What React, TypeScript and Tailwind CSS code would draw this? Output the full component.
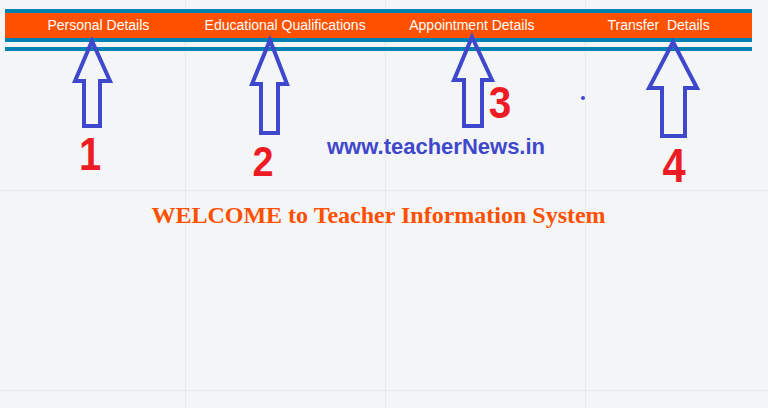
import React from "react";

const navItems = ["Personal Details", "Educational Qualifications", "Appointment Details", "Transfer\u00a0 Details"];

const arrows: number[][] = [
  // tipX, tipY, headL, headR, headY, shaftL, shaftR, bottom
  [92, 41, 75, 110, 81, 84, 100, 126],
  [270, 40, 252, 287, 84, 261, 278, 133],
  [472, 37, 454, 492, 80, 464, 482, 126],
  [673, 42, 649, 697, 88, 662, 685, 136],
];

export default function App() {
  return (
    <div
      className="relative w-full min-h-[408px] overflow-hidden bg-[#f3f5f7] bg-[linear-gradient(to_right,#e5eaef_1px,transparent_1px),linear-gradient(to_bottom,#e5eaef_1px,transparent_1px)] bg-[size:200px_200px] bg-[position:185px_190px]"
      style={{ fontFamily: '"Liberation Sans", Arial, sans-serif' }}
    >
      {/* Navigation bar */}
      <div className="pt-[9px] pl-[5px]">
        <div className="w-[747px]">
          <div className="border-t-4 border-b-4 border-[#0282b3] bg-[#ff5100]">
            <div className="grid grid-cols-4 h-[25px] items-center text-[14px] leading-[25px] text-white">
              {navItems.map((t) => (
                <div key={t} className="text-center whitespace-pre">{t}</div>
              ))}
            </div>
          </div>
          <div className="mt-[5px] h-[4px] bg-[#0282b3]" />
        </div>
      </div>

      {/* Site watermark */}
      <div className="mt-[85px] pl-[327px] text-[22px] leading-[22px] font-bold text-[#3f48cc]">
        www.teacherNews.in
      </div>

      {/* Welcome heading */}
      <div className="pl-[5px]">
        <h1
          className="w-[747px] mt-[45px] text-center text-[24px] leading-[24px] font-bold text-[#ff5000]"
          style={{ fontFamily: '"Liberation Serif", "Times New Roman", serif' }}
        >
          WELCOME to Teacher Information System
        </h1>
      </div>

      {/* Annotation arrows */}
      <svg className="pointer-events-none absolute left-0 top-0" width="768" height="408" viewBox="0 0 768 408">
        {arrows.map(([tx, ty, hl, hr, hy, sl, sr, b], i) => (
          <polygon
            key={i}
            points={`${tx},${ty} ${hr},${hy} ${sr},${hy} ${sr},${b} ${sl},${b} ${sl},${hy} ${hl},${hy}`}
            fill="none"
            stroke="#3f48cc"
            strokeWidth="4"
            strokeLinejoin="miter"
          />
        ))}
        <circle cx="583" cy="98" r="2" fill="#3f48cc" />
      </svg>

      {/* Annotation numbers */}
      <div className="absolute left-[70px] top-[130px] w-[40px] scale-x-[0.85] text-center text-[47px] leading-[47px] font-bold text-[#ed1c24]">1</div>
      <div className="absolute left-[243px] top-[141px] w-[40px] scale-x-[0.9] text-center text-[42px] leading-[42px] font-bold text-[#ed1c24]">2</div>
      <div className="absolute left-[480px] top-[80px] w-[40px] scale-x-[0.9] text-center text-[45px] leading-[45px] font-bold text-[#ed1c24]">3</div>
      <div className="absolute left-[654px] top-[141px] w-[40px] scale-x-[0.85] text-center text-[49px] leading-[49px] font-bold text-[#ed1c24]">4</div>
    </div>
  );
}
